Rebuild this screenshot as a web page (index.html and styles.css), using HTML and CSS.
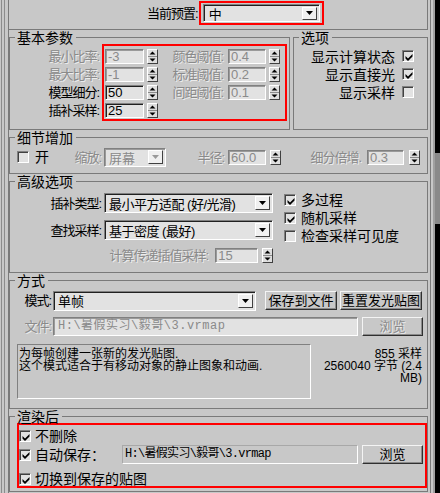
FILE: index.html
```html
<!DOCTYPE html>
<html lang="zh-CN">
<head>
    <meta charset="UTF-8">
    <meta name="viewport" content="width=device-width, initial-scale=1.0">
    <title>发光贴图</title>
    <link rel="stylesheet" href="styles.css">
</head>
<body>
<div class="window">
    <div class="edge-left"></div>
    <div class="panel">

        <div class="preset">
            <span class="lbl">当前预置:</span>
            <div class="hl preset-box">
                <div class="select preset-select">
                    <span>中</span>
                    <span class="select-btn"><svg width="7" height="4" viewBox="0 0 7 4"><path d="M0 0h7L3.5 4z"/></svg></span>
                </div>
            </div>
        </div>

        <div class="top-row">
            <div class="group basic">
                <div class="group-title">基本参数</div>
                <div class="basic-body">
                    <div class="basic-labels">
                        <span class="lbl off">最小比率:</span>
                        <span class="lbl off">最大比率:</span>
                        <span class="lbl">模型细分:</span>
                        <span class="lbl">插补采样:</span>
                    </div>
                    <div class="hl basic-box">
                        <span class="field off">-3</span>
                        <span class="spin"><svg width="9" height="13" viewBox="0 0 9 13"><path d="M4.5 1.5l3 3h-6z M1.5 8.5h6l-3 3z"/><path d="M0 6.5h9" stroke="#8a8a8a"/></svg></span>
                        <span class="lbl off mid-lbl">颜色阈值:</span>
                        <span class="field off">0.4</span>
                        <span class="spin"><svg width="9" height="13" viewBox="0 0 9 13"><path d="M4.5 1.5l3 3h-6z M1.5 8.5h6l-3 3z"/><path d="M0 6.5h9" stroke="#8a8a8a"/></svg></span>

                        <span class="field off">-1</span>
                        <span class="spin"><svg width="9" height="13" viewBox="0 0 9 13"><path d="M4.5 1.5l3 3h-6z M1.5 8.5h6l-3 3z"/><path d="M0 6.5h9" stroke="#8a8a8a"/></svg></span>
                        <span class="lbl off mid-lbl">标准阈值:</span>
                        <span class="field off">0.2</span>
                        <span class="spin"><svg width="9" height="13" viewBox="0 0 9 13"><path d="M4.5 1.5l3 3h-6z M1.5 8.5h6l-3 3z"/><path d="M0 6.5h9" stroke="#8a8a8a"/></svg></span>

                        <span class="field">50</span>
                        <span class="spin"><svg width="9" height="13" viewBox="0 0 9 13"><path d="M4.5 1.5l3 3h-6z M1.5 8.5h6l-3 3z"/><path d="M0 6.5h9" stroke="#8a8a8a"/></svg></span>
                        <span class="lbl off mid-lbl">间距阈值:</span>
                        <span class="field off">0.1</span>
                        <span class="spin"><svg width="9" height="13" viewBox="0 0 9 13"><path d="M4.5 1.5l3 3h-6z M1.5 8.5h6l-3 3z"/><path d="M0 6.5h9" stroke="#8a8a8a"/></svg></span>

                        <span class="field">25</span>
                        <span class="spin"><svg width="9" height="13" viewBox="0 0 9 13"><path d="M4.5 1.5l3 3h-6z M1.5 8.5h6l-3 3z"/><path d="M0 6.5h9" stroke="#8a8a8a"/></svg></span>
                    </div>
                </div>
            </div>

            <div class="group options">
                <div class="group-title">选项</div>
                <div class="opt-list">
                    <div class="opt"><span>显示计算状态</span><span class="check"><svg width="8" height="8" viewBox="0 0 8 8"><path d="M0.5 3 3 5.5 7.5 1v2.5L3 8 0.5 5.5z"/></svg></span></div>
                    <div class="opt"><span>显示直接光</span><span class="check"><svg width="8" height="8" viewBox="0 0 8 8"><path d="M0.5 3 3 5.5 7.5 1v2.5L3 8 0.5 5.5z"/></svg></span></div>
                    <div class="opt"><span>显示采样</span><span class="check"></span></div>
                </div>
            </div>
        </div>

        <div class="group detail">
            <div class="group-title">细节增加</div>
            <div class="detail-row">
                <span class="check"></span>
                <span class="ck-text on-text">开</span>
                <span class="lbl off scale-lbl">缩放:</span>
                <div class="select scale-select off">
                    <span>屏幕</span>
                    <span class="select-btn"><svg width="7" height="4" viewBox="0 0 7 4"><path d="M0 0h7L3.5 4z" fill="#9a9a9a"/></svg></span>
                </div>
                <span class="lbl off radius-lbl">半径:</span>
                <span class="field off radius-field">60.0</span>
                <span class="spin"><svg width="9" height="13" viewBox="0 0 9 13"><path d="M4.5 1.5l3 3h-6z M1.5 8.5h6l-3 3z"/><path d="M0 6.5h9" stroke="#8a8a8a"/></svg></span>
                <span class="lbl off mult-lbl">细分倍增.</span>
                <span class="field off mult-field">0.3</span>
                <span class="spin"><svg width="9" height="13" viewBox="0 0 9 13"><path d="M4.5 1.5l3 3h-6z M1.5 8.5h6l-3 3z"/><path d="M0 6.5h9" stroke="#8a8a8a"/></svg></span>
            </div>
        </div>

        <div class="group advanced">
            <div class="group-title">高级选项</div>
            <div class="adv-body">
                <div class="adv-left">
                    <div class="adv-row">
                        <span class="lbl adv-lbl">插补类型:</span>
                        <div class="select adv-select">
                            <span>最小平方适配 (好/光滑)</span>
                            <span class="select-btn"><svg width="7" height="4" viewBox="0 0 7 4"><path d="M0 0h7L3.5 4z"/></svg></span>
                        </div>
                    </div>
                    <div class="adv-row">
                        <span class="lbl adv-lbl">查找采样:</span>
                        <div class="select adv-select">
                            <span>基于密度 (最好)</span>
                            <span class="select-btn"><svg width="7" height="4" viewBox="0 0 7 4"><path d="M0 0h7L3.5 4z"/></svg></span>
                        </div>
                    </div>
                    <div class="adv-row pass-row">
                        <span class="lbl off pass-lbl">计算传递插值采样:</span>
                        <span class="field off pass-field">15</span>
                        <span class="spin"><svg width="9" height="13" viewBox="0 0 9 13"><path d="M4.5 1.5l3 3h-6z M1.5 8.5h6l-3 3z"/><path d="M0 6.5h9" stroke="#8a8a8a"/></svg></span>
                    </div>
                </div>
                <div class="adv-right">
                    <div class="ck-row"><span class="check"><svg width="8" height="8" viewBox="0 0 8 8"><path d="M0.5 3 3 5.5 7.5 1v2.5L3 8 0.5 5.5z"/></svg></span><span class="ck-text">多过程</span></div>
                    <div class="ck-row"><span class="check"><svg width="8" height="8" viewBox="0 0 8 8"><path d="M0.5 3 3 5.5 7.5 1v2.5L3 8 0.5 5.5z"/></svg></span><span class="ck-text">随机采样</span></div>
                    <div class="ck-row"><span class="check"></span><span class="ck-text">检查采样可见度</span></div>
                </div>
            </div>
        </div>

        <div class="group mode">
            <div class="group-title">方式</div>
            <div class="mode-body">
                <div class="mode-row">
                    <span class="lbl mode-lbl">模式:</span>
                    <div class="select mode-select">
                        <span>单帧</span>
                        <span class="select-btn"><svg width="7" height="4" viewBox="0 0 7 4"><path d="M0 0h7L3.5 4z"/></svg></span>
                    </div>
                    <button class="btn save-btn">保存到文件</button>
                    <button class="btn reset-btn">重置发光贴图</button>
                </div>
                <div class="mode-row file-row">
                    <span class="lbl off mode-lbl">文件:</span>
                    <span class="field off path-field">H:\暑假实习\毅哥\3.vrmap</span>
                    <button class="btn off browse-btn">浏览</button>
                </div>
                <div class="mode-row info-row">
                    <div class="note">
                        <div class="note-line">为每帧创建一张新的发光贴图.</div>
                        <div class="note-line">这个模式适合于有移动对象的静止图象和动画.</div>
                    </div>
                    <div class="stats">
                        <div class="note-line">855 采样</div>
                        <div class="note-line">2560040 字节 (2.4</div>
                        <div class="note-line">MB)</div>
                    </div>
                </div>
            </div>
        </div>

        <div class="group after">
            <div class="group-title">渲染后</div>
            <div class="hl after-box">
                <div class="after-row">
                    <span class="check"><svg width="8" height="8" viewBox="0 0 8 8"><path d="M0.5 3 3 5.5 7.5 1v2.5L3 8 0.5 5.5z"/></svg></span>
                    <span class="ck-text">不删除</span>
                </div>
                <div class="after-row save-row">
                    <span class="check"><svg width="8" height="8" viewBox="0 0 8 8"><path d="M0.5 3 3 5.5 7.5 1v2.5L3 8 0.5 5.5z"/></svg></span>
                    <span class="ck-text autosave-lbl">自动保存：</span>
                    <span class="path-static">H:\暑假实习\毅哥\3.vrmap</span>
                    <button class="btn browse-btn">浏览</button>
                </div>
                <div class="after-row switch-row">
                    <span class="check"><svg width="8" height="8" viewBox="0 0 8 8"><path d="M0.5 3 3 5.5 7.5 1v2.5L3 8 0.5 5.5z"/></svg></span>
                    <span class="ck-text">切换到保存的贴图</span>
                </div>
            </div>
        </div>

    </div>
    <div class="edge-right"></div>
    <div class="scrollbar">
        <div class="track track-top"></div>
        <div class="thumb"></div>
        <div class="track track-rest"></div>
    </div>
</div>
</body>
</html>
```

FILE: styles.css
```css
body {
    margin: 0;
    background-color: #c8c8c8;
    font-family: "Liberation Sans", "Noto Sans CJK SC", sans-serif;
    font-size: 13px;
    color: #000;
}

.window {
    display: flex;
    width: 440px;
    height: 493px;
    overflow: hidden;
}
.edge-left {
    width: 8px;
    flex: none;
    background: linear-gradient(to right, transparent 1px, #8c8c8c 1px 2px, transparent 2px 4px, #8c8c8c 4px 5px, transparent 5px);
}
.panel {
    width: 423px;
    flex: none;
    box-sizing: border-box;
    border-left: 1px solid #7a7a7a;
    border-right: 1px solid #7a7a7a;
}
.edge-right {
    width: 4px;
    flex: none;
    background: linear-gradient(to right, transparent 2px, #a0a0a0 2px);
}
.scrollbar {
    width: 5px;
    flex: none;
    display: flex;
    flex-direction: column;
}
.track {
    background-color: #000;
}
.track-top {
    height: 153px;
}
.track-rest {
    flex: 1;
}
.thumb {
    height: 71px;
    background-color: #8a8a8a;
}

/* common controls */
.hl {
    border: 2px solid #ff0000;
    box-sizing: border-box;
}
.lbl {
    font-size: 13px;
    letter-spacing: -1px;
    line-height: 15px;
    white-space: nowrap;
}
.off {
    color: #8a8a8a;
    text-shadow: 1px 1px 0 #ececec;
}
.field {
    box-sizing: border-box;
    height: 15px;
    display: block;
    background-color: #e2e2e2;
    border: 1px solid;
    border-color: #808080 #fff #fff #808080;
    box-shadow: inset 1px 1px 0 #202020;
    font-size: 13px;
    line-height: 13px;
    padding-left: 2px;
    white-space: nowrap;
    overflow: hidden;
}
.field.off {
    text-shadow: none;
    box-shadow: inset 1px 1px 0 #9a9a9a;
}
.spin {
    box-sizing: border-box;
    width: 11px;
    height: 15px;
    flex: none;
    display: flex;
    background-color: #dedede;
    border: 1px solid;
    border-color: #fff #404040 #404040 #fff;
}
.select {
    box-sizing: border-box;
    display: flex;
    align-items: center;
    background-color: #e2e2e2;
    border: 1px solid;
    border-color: #808080 #fff #fff #808080;
    box-shadow: inset 1px 1px 0 #202020;
    padding-left: 4px;
    font-size: 13px;
    white-space: nowrap;
}
.select-btn {
    box-sizing: border-box;
    margin-left: auto;
    margin-right: 2px;
    width: 15px;
    height: 14px;
    flex: none;
    display: flex;
    align-items: center;
    justify-content: center;
    background-color: #f0f0f0;
    border: 1px solid;
    border-color: #fff #404040 #404040 #fff;
}
.check {
    box-sizing: border-box;
    width: 12px;
    height: 12px;
    flex: none;
    display: flex;
    align-items: center;
    justify-content: center;
    background-color: #e2e2e2;
    border: 1px solid;
    border-color: #808080 #fff #fff #808080;
    box-shadow: inset 1px 1px 0 #404040;
}
.check svg {
    margin: 1px 0 0 1px;
}
.ck-text {
    font-size: 14px;
    line-height: 16px;
    white-space: nowrap;
}
.btn {
    box-sizing: border-box;
    height: 19px;
    padding: 0;
    background-color: #c8c8c8;
    border: 1px solid;
    border-color: #f4f4f4 #303030 #303030 #f4f4f4;
    box-shadow: inset -1px -1px 0 #8a8a8a;
    font-family: "Liberation Sans", "Noto Sans CJK SC", sans-serif;
    font-size: 13px;
    line-height: 15px;
    color: #000;
    white-space: nowrap;
}
.btn.off {
    color: #8a8a8a;
}

/* group boxes */
.group {
    box-sizing: border-box;
    border: 1px solid #7a7a7a;
}
.group-title {
    width: max-content;
    margin: -7px 0 -7px 5px;
    padding: 0 3px 0 2px;
    background-color: #c8c8c8;
    font-size: 14px;
    line-height: 14px;
    height: 14px;
}
.panel > .group {
    margin: 7px 2px 0 0;
}

/* preset */
.preset {
    display: flex;
    align-items: center;
    height: 24px;
    padding: 1px 0 4px 138px;
    margin-right: 2px;
    border-bottom: 1px solid #7a7a7a;
    border-right: 1px solid #7a7a7a;
}
.preset-box {
    margin-left: 1px;
    padding: 1px 2px;
    align-self: flex-start;
}
.preset-select {
    width: 117px;
    height: 18px;
    padding-left: 5px;
}
.preset-select .select-btn {
    height: 13px;
}

/* basic + options */
.top-row {
    display: flex;
    gap: 3px;
    height: 93px;
    margin: 7px 2px 0 0;
}
.basic {
    width: 281px;
    flex: none;
}
.options {
    flex: 1;
}
.basic-body {
    display: flex;
    padding-top: 6px;
}
.basic-labels {
    box-sizing: border-box;
    width: 92px;
    padding: 5px 3px 0 0;
    display: flex;
    flex-direction: column;
    align-items: flex-end;
    gap: 3px;
}
.basic-box {
    width: 185px;
    height: 77px;
    padding: 3px 0 1px 1px;
    display: grid;
    grid-template-columns: 39px 11px 64px 38px 11px;
    grid-auto-rows: 15px;
    column-gap: 3px;
    row-gap: 3px;
}
.mid-lbl {
    text-align: right;
    padding-right: 2px;
}
.opt-list {
    padding: 9px 13px 0 0;
    display: flex;
    flex-direction: column;
    align-items: flex-end;
}
.opt {
    display: flex;
    align-items: center;
    gap: 7px;
    height: 18px;
    font-size: 14px;
    white-space: nowrap;
}

/* detail */
.detail {
    height: 37px;
}
.detail-row {
    display: flex;
    align-items: center;
    height: 20px;
    padding: 9px 0 0 7px;
}
.on-text {
    margin-left: 6px;
}
.scale-lbl {
    width: 52px;
    text-align: right;
}
.scale-select {
    width: 62px;
    height: 19px;
    margin-left: 3px;
    box-shadow: inset 1px 1px 0 #9a9a9a;
}
.radius-lbl {
    width: 58px;
    text-align: right;
}
.radius-field {
    width: 38px;
    margin: 0 4px;
}
.mult-lbl {
    width: 80px;
    text-align: right;
}
.mult-field {
    width: 37px;
    margin: 0 5px 0 6px;
}

/* advanced */
.advanced {
    height: 92px;
}
.adv-body {
    display: flex;
    padding-top: 9px;
}
.adv-left {
    width: 263px;
    padding-top: 2px;
}
.adv-row {
    display: flex;
    align-items: center;
    height: 20px;
    margin-bottom: 7px;
}
.adv-lbl {
    width: 91px;
    text-align: right;
}
.adv-select {
    width: 169px;
    height: 20px;
    margin-left: 3px;
    letter-spacing: -0.5px;
}
.pass-row {
    height: 15px;
    margin-top: 8px;
}
.pass-lbl {
    width: 199px;
    text-align: right;
}
.pass-field {
    width: 43px;
    margin: 0 4px 0 7px;
}
.adv-right {
    margin-left: 11px;
}
.ck-row {
    display: flex;
    align-items: center;
    gap: 5px;
    height: 18px;
}

/* mode */
.mode {
    height: 129px;
}
.mode-body {
    padding-top: 9px;
}
.mode-row {
    display: flex;
    align-items: center;
    height: 21px;
}
.mode-lbl {
    width: 41px;
    text-align: right;
}
.mode-select {
    width: 203px;
    height: 20px;
    margin-left: 2px;
}
.save-btn {
    width: 72px;
    margin-left: 9px;
}
.reset-btn {
    width: 82px;
    margin-left: 3px;
}
.file-row {
    height: 19px;
    margin-top: 6px;
}
.path-field {
    width: 305px;
    height: 19px;
    margin-left: 2px;
    padding-left: 4px;
    line-height: 17px;
    font-family: "Liberation Mono", "Noto Sans CJK SC", monospace;
    font-size: 12px;
    letter-spacing: 0.5px;
    box-shadow: inset 1px 1px 0 #404040;
}
.browse-btn {
    width: 61px;
    margin-left: 4px;
}
.browse-btn.off {
    text-shadow: 1px 1px 0 #ececec;
}
.info-row {
    height: auto;
    align-items: flex-start;
    margin-top: 8px;
}
.note {
    box-sizing: border-box;
    width: 294px;
    height: 55px;
    margin-left: 7px;
    padding: 3px 0 0 1px;
    border: 1px solid;
    border-color: #808080 #fff #fff #808080;
    font-size: 12px;
}
.note-line {
    height: 12px;
    line-height: 12px;
    white-space: nowrap;
}
.stats {
    margin-left: auto;
    padding: 4px 5px 0 0;
    text-align: right;
    font-size: 12px;
}

/* after render */
.after {
    height: 76px;
}
.after-box {
    width: 410px;
    height: 65px;
    margin: 6px 0 0 7px;
    padding-top: 2px;
}
.after-row {
    display: flex;
    align-items: center;
    height: 18px;
}
.after-row .ck-text {
    margin-left: 4px;
}
.save-row {
    height: 19px;
}
.autosave-lbl {
    width: 87px;
}
.path-static {
    box-sizing: border-box;
    width: 236px;
    height: 19px;
    border: 1px solid;
    border-color: #a8a8a8 #fff #fff #a8a8a8;
    padding-left: 2px;
    font-family: "Liberation Mono", "Noto Sans CJK SC", monospace;
    font-size: 12px;
    letter-spacing: -0.7px;
    line-height: 17px;
    white-space: nowrap;
}
.switch-row {
    height: 14px;
    margin-top: 8px;
}
```
